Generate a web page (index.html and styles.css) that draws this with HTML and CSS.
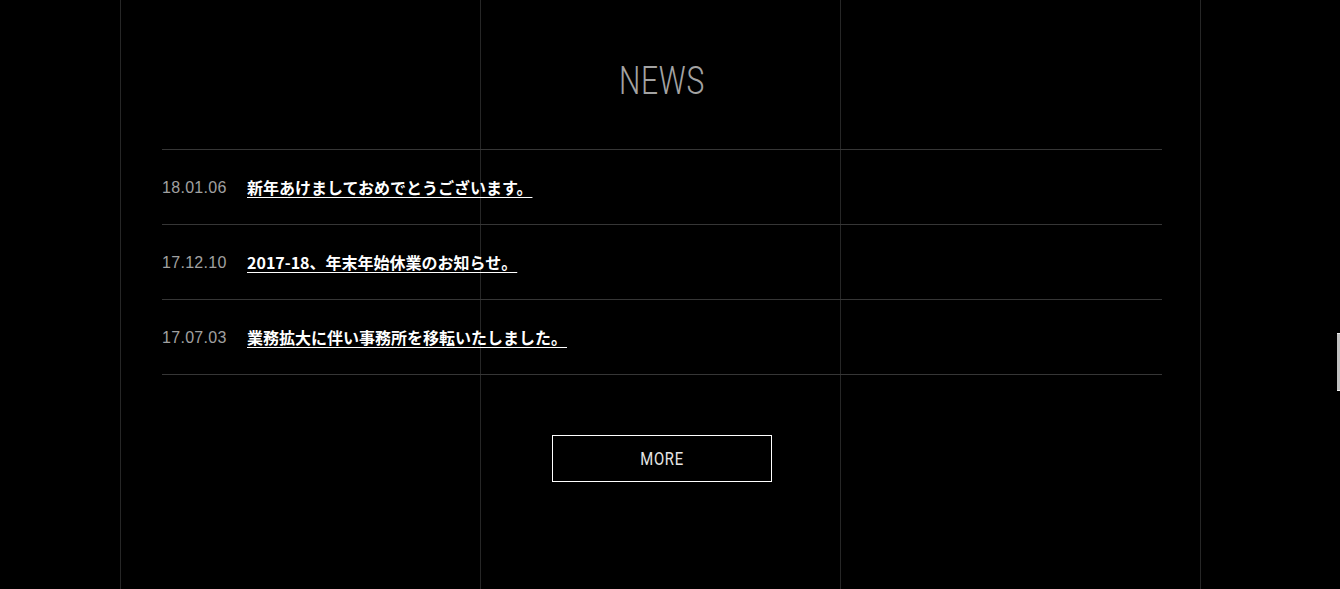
FILE: index.html
```html
<!DOCTYPE html>
<html lang="ja">
<head>
<meta charset="utf-8">
<title>NEWS</title>
<link rel="stylesheet" href="styles.css">
</head>
<body>
<div class="page">
  <section class="news">
    <h2 class="news-title"><span>NEWS</span></h2>
    <ul class="news-list">
      <li class="news-item">
        <span class="news-date">18.01.06</span>
        <a class="news-link" href="#">新年あけましておめでとうございます。</a>
      </li>
      <li class="news-item">
        <span class="news-date">17.12.10</span>
        <a class="news-link" href="#">2017-18、年末年始休業のお知らせ。</a>
      </li>
      <li class="news-item">
        <span class="news-date">17.07.03</span>
        <a class="news-link" href="#">業務拡大に伴い事務所を移転いたしました。</a>
      </li>
    </ul>
    <div class="more-wrap">
      <a class="more-btn" href="#"><span>MORE</span></a>
    </div>
  </section>
</div>
<div class="scroll-thumb"></div>
</body>
</html>
```

FILE: styles.css
```css
html, body {
  margin: 0;
  padding: 0;
  background: #000;
  height: 100%;
  overflow: hidden;
}

body {
  font-family: Roboto, "Noto Sans CJK JP", sans-serif;
  color: #fff;
}

.page {
  margin-left: 120px;
  width: 1081px;
  min-height: 589px;
  background-image:
    linear-gradient(to right, #262626 0, #262626 1px, transparent 1px),
    linear-gradient(to right, #262626 0, #262626 1px, transparent 1px),
    linear-gradient(to right, #262626 0, #262626 1px, transparent 1px),
    linear-gradient(to right, #262626 0, #262626 1px, transparent 1px);
  background-repeat: no-repeat;
  background-size: 1px 100%;
  background-position: 0 0, 360px 0, 720px 0, 1080px 0;
  padding-top: 62px;
  box-sizing: border-box;
}

.news {
  width: 1000px;
  margin-left: 42px;
}

.news-title {
  margin: 0 0 48px;
  font-size: 39px;
  line-height: 39px;
  font-weight: 300;
  color: #a3a3a3;
  text-align: center;
}

.news-title span {
  display: inline-block;
  transform: scaleX(0.77);
  letter-spacing: 1px;
}

.news-list {
  list-style: none;
  margin: 0;
  padding: 0;
  border-bottom: 1px solid #363636;
}

.news-item {
  display: flex;
  align-items: center;
  height: 74px;
  border-top: 1px solid #363636;
}

.news-date {
  width: 85px;
  font-family: "Liberation Sans", Arial, sans-serif;
  font-size: 16px;
  letter-spacing: 0.3px;
  color: #a0a0a0;
  position: relative;
  top: 1px;
}

.news-link {
  font-family: "Noto Sans CJK JP", sans-serif;
  font-size: 16px;
  font-weight: 700;
  color: #fff;
  text-decoration: underline;
  text-underline-offset: 3px;
  text-decoration-thickness: 1px;
  padding-right: 1px;
}

.more-wrap {
  display: flex;
  justify-content: center;
  margin-top: 60px;
}

.more-btn {
  display: flex;
  align-items: center;
  justify-content: center;
  width: 218px;
  height: 45px;
  border: 1px solid #fff;
  color: #e6e6e6;
  text-decoration: none;
  font-size: 19px;
  font-weight: 400;
}

.more-btn span {
  display: inline-block;
  transform: scaleX(0.78);
  letter-spacing: 1px;
}

.scroll-thumb {
  position: absolute;
  right: 0;
  top: 333px;
  width: 3px;
  height: 56px;
  background: #c2c2c2;
  border-top: 1px solid #eee;
  border-bottom: 1px solid #eee;
}
```
